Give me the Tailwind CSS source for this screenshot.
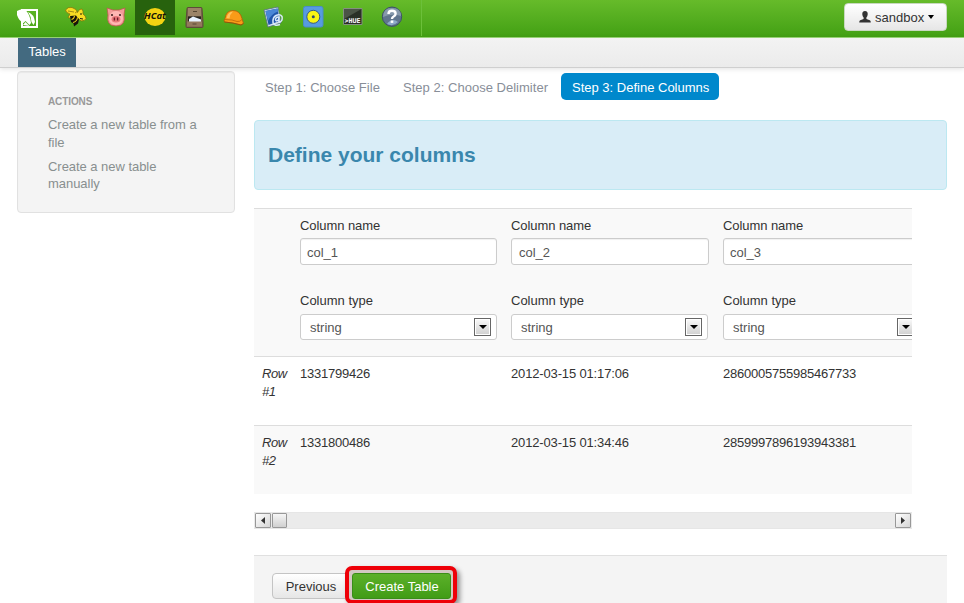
<!DOCTYPE html>
<html lang="en">
<head>
<meta charset="utf-8">
<title>HCatalog: Define Columns</title>
<script src="https://cdn.jsdelivr.net/npm/@tailwindcss/browser@4"></script>
</head>
<body class="h-[603px] w-[964px] overflow-hidden bg-white font-['Liberation_Sans',Arial,sans-serif] text-[13px] leading-[18px] text-[#333]">

<header class="flex h-[38px] items-start border-b border-[#9bd878] bg-linear-to-b from-[#66bb2a] to-[#42a013]">
  <div class="flex h-[36px] w-[422px] shrink-0 border-r border-[#6cc03a] pl-[17px]">
    <div class="w-[39px] pt-[8px]">
      <svg width="22" height="21" viewBox="0 0 22 21"><path d="M5 2h15v17H5z" fill="none" stroke="#fff" stroke-width="2"/><path d="M0 3Q4 .5 8 1.500 13 6 14 15L12.500 17 8.500 13 6.500 15Q2 13 0 7Z" fill="#fff"/><path d="M11 4Q17 6 18 14L16.500 17 14.500 14Q14 8 11 4z" fill="#fff"/><path d="M6 17l2.500-3 4 4z" fill="#fff"/></svg>
    </div>
    <div class="w-[39px] pt-[6px] pl-[9px]">
      <svg width="22" height="22" viewBox="0 0 22 22"><path d="M.5 4Q3 .5 7 1.500q5 1.500 5.500 5Q14 2.500 17 3q1.500 2 1 5 3 2 3 4.500-1 2.500-5 2.500l-3-3-4 1.500-6-2 2-3.500Q1 7 .5 4z" fill="#f9dc22" stroke="#806d08" stroke-width=".7"/><path d="M3 5l6 1M10 7l3-2" fill="none" stroke="#8b7714" stroke-width=".8"/><path d="M5 10l6-.500 3 4-1 4-4 3-.500-3-2.500-1.500z" fill="#17140b"/><path d="M8 16.500q4-1 4.500-5M6.500 13.500q2.500-.500 3-3.500" stroke="#f2cf17" stroke-width="1.100" fill="none"/><path d="M15 8h2M15 12.500l3 .500" stroke="#1b1b04" stroke-width="1"/></svg>
    </div>
    <div class="w-[40px] pt-[7px] pl-[11px]">
      <svg width="20" height="20" viewBox="0 0 20 20"><path d="M1 1l6 2h6l6-2-1 7q2 11-8 11T2 8z" fill="#f39b98" stroke="#ba5b4e" stroke-width=".8"/><ellipse cx="10" cy="11" rx="7" ry="7" fill="#ffb7b3"/><ellipse cx="10" cy="12.200" rx="4.400" ry="3.300" fill="#e9787b"/><path d="M8.400 10.500v3M11.600 10.500v3" stroke="#6d1d26" stroke-width="1.400"/><circle cx="6" cy="8" r="1.100" fill="#422"/><circle cx="14" cy="8" r="1.100" fill="#422"/></svg>
    </div>
    <div class="h-[35px] w-[40px] bg-[#27620d] pt-[7px] pl-[8px]">
      <svg width="24" height="20" viewBox="0 0 24 20" class="overflow-visible"><ellipse cx="12" cy="10" rx="10.500" ry="9" fill="#f4d312"/></svg>
      <div class="-mt-[18px] -ml-[8px] h-[14px] w-[40px] text-center font-['Open_Sans',sans-serif] text-[9.500px] leading-[14px] font-bold text-[#171707] italic">HCat</div>
    </div>
    <div class="w-[39px] pt-[7px] pl-[10px]">
      <svg width="20" height="21" viewBox="0 0 20 21"><path d="M3 .5h13q1 0 1 1l1 13v5q0 1-1 1H2q-1 0-1-1v-5l1-13q0-1 1-1z" fill="#79644d" stroke="#5d4c38"/><path d="M3 1h13v8H3z" fill="#9c8468"/><path d="M3 9.500h13v5H3z" fill="#29251f"/><path d="M4 12l4-2.500 8 3V15H4z" fill="#e9f3ff"/><path d="M2 14.500h15v5H2z" fill="#93795d"/><path d="M8 4h4v1H8zM7.500 16.500h4v1h-4z" fill="#584834"/></svg>
    </div>
    <div class="w-[40px] pt-[9px] pl-[9px]">
      <svg width="22" height="18" viewBox="0 0 22 18"><path d="M2 9.500Q3 1.500 10 1.500q7 0 9 8l1.500 5-2.500 1.500-8-2-8.500-1Q.5 11 2 9.500z" fill="#f99b18" stroke="#ac5f08" stroke-width=".8"/><path d="M3.500 9Q5 2.500 10 2.500 7 5 6.500 9.500z" fill="#ffc35c"/><path d="M2 10.500q8 0 12 2 3 .500 5-2" stroke="#c8720c" fill="none"/><path d="M1.500 13l8 1 8.500 2 2.500-1.500" stroke="#84500c" fill="none" stroke-width=".8"/></svg>
    </div>
    <div class="w-[39px] pt-[6px] pl-[9px]">
      <svg width="22" height="23" viewBox="0 0 22 23"><path d="M1 4l14-3 3 16-13 4z" fill="#d7e3ec" stroke="#536f87" stroke-width=".8"/><path d="M2.500 5l12-2.500 2 12.500-11 4z" fill="#1f55aa"/><path d="M2.500 5l12-2.500.5 3Q8 8 5 15z" fill="#4986d6"/><path d="M17 18.500q-6 2-7-2-.5-5 3-7 4-2 6 1 1 4-2 5.500-2 0-1-5-3-.500-3.500 2.500.500 3 3.500-.500" fill="none" stroke="#d9e9fa" stroke-width="1.500"/></svg>
    </div>
    <div class="w-[39px] pt-[6px] pl-[10px]">
      <svg width="21" height="22" viewBox="0 0 21 22"><rect x=".5" y=".5" width="19.500" height="20.500" rx="2" fill="#579be0" stroke="#4a8bc9"/><circle cx="10.300" cy="10.800" r="6.500" fill="#f9f514" stroke="#31578a" stroke-width="1"/><circle cx="10.300" cy="10.800" r="1.500" fill="#334b69"/></svg>
    </div>
    <div class="w-[39px] pt-[8px] pl-[11px]">
      <svg width="20" height="17" viewBox="0 0 20 17"><path d="M.5.5h18.500v16H.5z" fill="#2a3027" stroke="#84907f"/><path d="M1 1h17.500L1 11z" fill="#4b5447"/><text x="1.500" y="14.500" textLength="16" lengthAdjust="spacingAndGlyphs" font-family="DejaVu Sans Mono" font-weight="bold" font-size="6.500" fill="#fff">&gt;HUE</text></svg>
    </div>
    <div class="pt-[6px] pl-[10px]">
      <svg width="22" height="22" viewBox="0 0 22 22"><circle cx="11" cy="10.700" r="9.700" fill="#60758d" stroke="#3d5168"/><path d="M2 11Q2 2 11 2t9 8q-9-3-18 1z" fill="#8799ac"/><path d="M6 18q5-7 11-2-5 5-11 2z" fill="#8eaaca"/><path d="M7.500 8q0-3.200 3.500-3.200 3.600 0 3.600 3 0 1.700-2 2.700-1.600.8-1.600 2.500" fill="none" stroke="#fff" stroke-width="2.400"/><rect x="9.700" y="14.500" width="2.600" height="2.400" fill="#fff"/></svg>
    </div>
  </div>
  <button class="mt-[3px] ml-[422px] flex h-[28px] w-[103px] items-center rounded-[4px] border border-[#c8d8c0] bg-linear-to-b from-white to-[#e6e6e6] pl-[14px]">
    <svg width="12" height="12" viewBox="0 0 12 12"><path d="M6 0Q9 0 8.700 3.600 8.500 5.500 7.400 6.400V8l3.400 1.200q1 .4 1 2.300H.2q0-1.900 1-2.300L4.600 8V6.400Q3.500 5.500 3.300 3.600 3 0 6 0z" fill="#333"/></svg>
    <span class="mt-[2px] ml-[4px] w-[49px] text-left">sandbox</span>
    <span class="ml-[4px] -mt-px size-0 border-x-[3.500px] border-t-[4px] border-x-transparent border-t-black"></span>
  </button>
</header>

<nav class="flex h-[30px] border-b border-[#cfcfcf] bg-linear-to-b from-[#f3f3f3] to-[#ebebeb] pl-[18px] shadow-[0_1px_5px_rgba(0,0,0,0.12)]">
  <a class="h-[29px] w-[58px] bg-[#436a80] pt-[5px] text-center text-white">Tables</a>
</nav>

<div class="flex items-start pl-[17px]">
  <aside class="mt-[3px] h-[142px] w-[218px] shrink-0 rounded-[4px] border border-[#e1e1e1] bg-[#f4f4f4] pt-[21px] pl-[30px] text-[#888f8f] shadow-[inset_0_1px_1px_rgba(0,0,0,0.05)]">
    <h4 class="text-[10px] font-bold tracking-[-0.100px] text-[#999]">ACTIONS</h4>
    <p class="mt-[5px] w-[160px] leading-[17.500px] tracking-[-0.040px]">Create a new table from a<br>file</p>
    <p class="mt-[7px] w-[160px] leading-[17px] tracking-[-0.040px]">Create a new table<br>manually</p>
  </aside>

  <main class="ml-[19px] w-[693px]">
    <ul class="mt-[5px] flex h-[27px] items-center leading-[29px] text-[#888e98]">
      <li class="ml-[11px] h-[27px] w-[138px] tracking-[0.040px]">Step 1: Choose File</li>
      <li class="h-[27px] w-[158px] tracking-[0.020px]">Step 2: Choose Delimiter</li>
      <li class="h-[27px] w-[158px] rounded-[5px] bg-[#0088cc] pl-[11px] text-white">Step 3: Define Columns</li>
    </ul>
    <div class="mt-[20px] h-[70px] rounded-[4px] border border-[#bce8f1] bg-[#d9edf7] pt-[21px] pl-[13px]">
      <h1 class="text-[21px] leading-[26px] font-bold text-[#3a87ad]">Define your columns</h1>
    </div>

    <div class="mt-[18px] h-[286px] w-[658px] overflow-hidden">
      <div class="grid h-[148px] w-[690px] grid-cols-[46px_211px_212px_221px] border-t border-[#ddd] bg-[#f9f9f9] pt-[8px]">
        <div></div>
        <div>
          <label class="block tracking-[-0.070px]">Column name</label>
          <div class="mt-[3px] h-[27px] w-[197px] rounded-[3px] border border-[#ccc] bg-white pl-[6px] leading-[27px] text-[#555] shadow-[inset_0_1px_1px_rgba(0,0,0,0.06)]">col_1</div>
          <label class="mt-[27px] block">Column type</label>
          <div class="mt-[4px] flex h-[26px] w-[197px] items-center justify-between rounded-[3px] border border-[#ccc] bg-white pr-[5px] pl-[9px] text-[#555]"><span class="mt-[2px]">string</span><span class="flex h-[18px] w-[17px] items-center justify-center border border-[#666] bg-linear-to-b from-[#fafafa] to-[#d0d0d0] shadow-[inset_0_0_0_1px_#fff]"><i class="size-0 border-x-[4px] border-t-[4px] border-x-transparent border-t-black"></i></span></div>
        </div>
        <div>
          <label class="block tracking-[-0.070px]">Column name</label>
          <div class="mt-[3px] h-[27px] w-[198px] rounded-[3px] border border-[#ccc] bg-white pl-[7px] leading-[27px] text-[#555] shadow-[inset_0_1px_1px_rgba(0,0,0,0.06)]">col_2</div>
          <label class="mt-[27px] block">Column type</label>
          <div class="mt-[4px] flex h-[26px] w-[197px] items-center justify-between rounded-[3px] border border-[#ccc] bg-white pr-[5px] pl-[9px] text-[#555]"><span class="mt-[2px]">string</span><span class="flex h-[18px] w-[17px] items-center justify-center border border-[#666] bg-linear-to-b from-[#fafafa] to-[#d0d0d0] shadow-[inset_0_0_0_1px_#fff]"><i class="size-0 border-x-[4px] border-t-[4px] border-x-transparent border-t-black"></i></span></div>
        </div>
        <div>
          <label class="block tracking-[-0.070px]">Column name</label>
          <div class="mt-[3px] h-[27px] w-[197px] rounded-[3px] border border-[#ccc] bg-white pl-[6px] leading-[27px] text-[#555] shadow-[inset_0_1px_1px_rgba(0,0,0,0.06)]">col_3</div>
          <label class="mt-[27px] block">Column type</label>
          <div class="mt-[4px] flex h-[26px] w-[197px] items-center justify-between rounded-[3px] border border-[#ccc] bg-white pr-[5px] pl-[9px] text-[#555]"><span class="mt-[2px]">string</span><span class="flex h-[18px] w-[17px] items-center justify-center border border-[#666] bg-linear-to-b from-[#fafafa] to-[#d0d0d0] shadow-[inset_0_0_0_1px_#fff]"><i class="size-0 border-x-[4px] border-t-[4px] border-x-transparent border-t-black"></i></span></div>
        </div>
      </div>
      <div class="grid h-[69px] w-[690px] grid-cols-[46px_211px_212px_221px] border-t border-[#ddd] bg-white pt-[8px] tracking-[-0.230px]">
        <div class="pl-[8px] tracking-[-0.400px] italic">Row<br>#1</div><div>1331799426</div><div class="tracking-[-0.150px]">2012-03-15 01:17:06</div><div>2860005755985467733</div>
      </div>
      <div class="grid h-[69px] w-[690px] grid-cols-[46px_211px_212px_221px] border-t border-[#ddd] bg-[#f9f9f9] pt-[8px] tracking-[-0.230px]">
        <div class="pl-[8px] tracking-[-0.400px] italic">Row<br>#2</div><div>1331800486</div><div class="tracking-[-0.150px]">2012-03-15 01:34:46</div><div>2859997896193943381</div>
      </div>
    </div>

    <div class="mt-[18px] flex h-[17px] w-[658px] items-center justify-between border-y border-[#e6e6e6] bg-[#ebebeb] px-px">
      <div class="flex gap-px">
        <span class="flex h-[15px] w-[16px] items-center justify-center rounded-[1px] border border-[#989898] bg-linear-to-br from-white to-[#d5d5d5]"><svg width="4" height="7" viewBox="0 0 4 7"><path d="M4 0v7L0 3.500z" fill="#333"/></svg></span>
        <span class="h-[15px] w-[15px] rounded-[1px] border border-[#989898] bg-linear-to-b from-[#f6f6f6] to-[#d0d0d0]"></span>
      </div>
      <span class="flex h-[15px] w-[16px] items-center justify-center rounded-[1px] border border-[#989898] bg-linear-to-br from-white to-[#d5d5d5]"><svg width="4" height="7" viewBox="0 0 4 7"><path d="M0 0v7l4-3.500z" fill="#333"/></svg></span>
    </div>

    <div class="mt-[26px] flex h-[60px] items-start border-t border-[#e0e0e0] bg-[#f4f4f4] pl-[18px]">
      <button class="mt-[17px] h-[26px] w-[77px] rounded-[4px] border border-[#c4c4c4] bg-linear-to-b from-white to-[#e6e6e6] pt-px pl-px">Previous</button>
      <div class="mt-[10px] -ml-[4px] h-[38px] w-[112px] rounded-[7px] border-[4px] border-[#ee0008] bg-[#d3c8c2] px-[3px] pt-[3px] shadow-[3px_3px_5px_rgba(0,0,0,0.4)]">
        <button class="block h-[26px] w-[99px] rounded-[3px] border border-[#3a8d18] bg-linear-to-b from-[#5bb029] to-[#419c16] pt-px pl-px text-white">Create Table</button>
      </div>
    </div>
  </main>
</div>
</body>
</html>
